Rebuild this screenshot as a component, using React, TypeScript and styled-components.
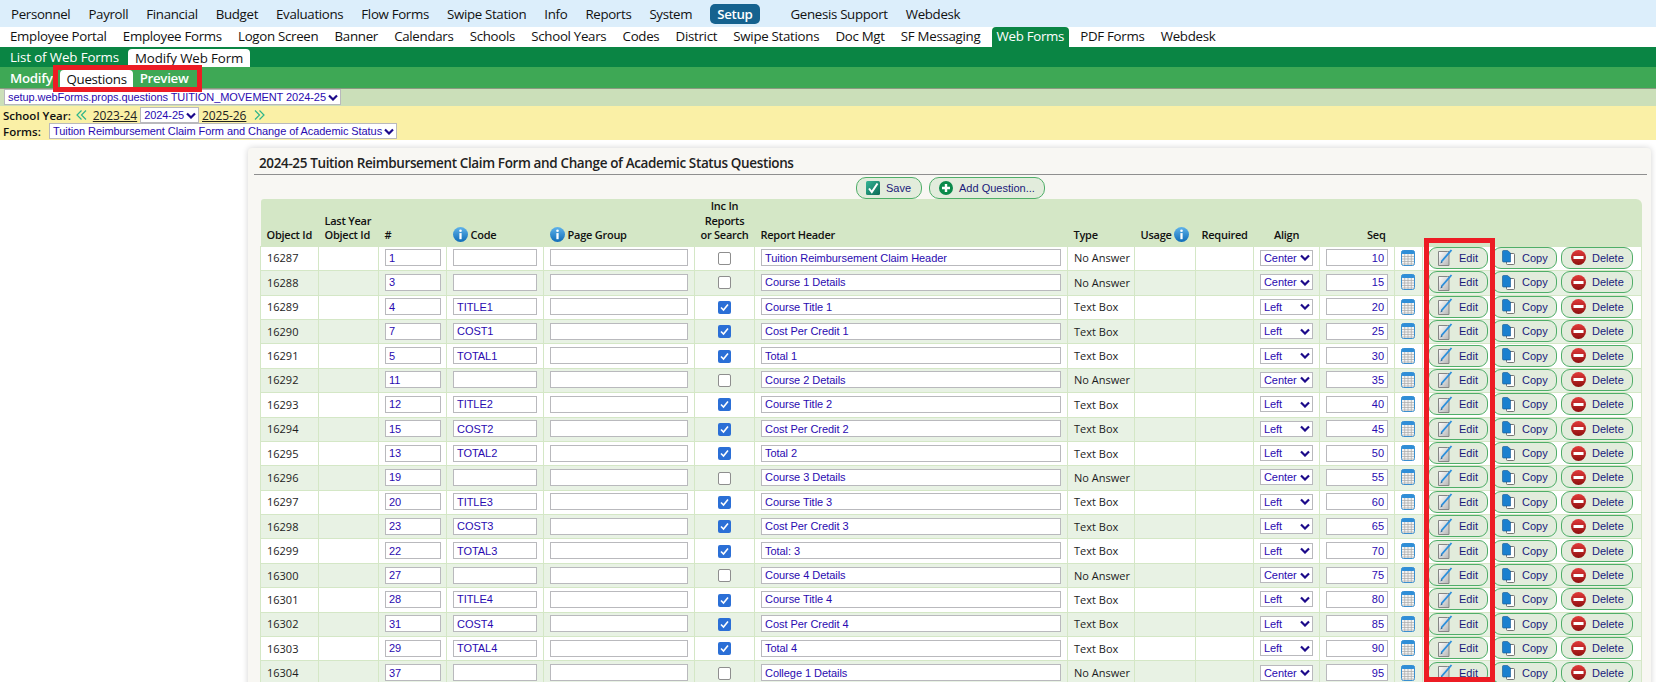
import React from "react";
import styled, { createGlobalStyle } from "styled-components";

const Global = createGlobalStyle`
  html, body { margin: 0; padding: 0; height: 682px; overflow: hidden; background: #fff; }
  body { font-family: "Open Sans", "Liberation Sans", sans-serif; color: #111; }
  * { box-sizing: border-box; }
`;

const Page = styled.div`display: flex; flex-direction: column; height: 682px; overflow: hidden; position: relative;`;
const MainMenu = styled.nav`height: 27px; background: #dcEEfb; display: flex; align-items: center; padding: 0 0 0 11px; gap: 18px; font-size: 13.3px; letter-spacing: -.33px;`;
const MainItem = styled.span<{ $active?: boolean; $gap?: number }>`
  color: ${p => (p.$active ? "#fff" : "#111")};
  background: ${p => (p.$active ? "#15628f" : "transparent")};
  font-weight: ${p => (p.$active ? 600 : 400)};
  border-radius: 5px;
  padding: ${p => (p.$active ? "1px 7px" : "0")};
  margin-left: ${p => p.$gap ?? 0}px;
  margin-right: ${p => (p.$active ? "-4px" : "0")};
`;
const SubMenu = styled.nav`height: 20px; background: #fff; display: flex; align-items: flex-end; padding-left: 10px; gap: 16.2px; font-size: 13.3px; letter-spacing: -.3px;`;
const SubItem = styled.span<{ $active?: boolean }>`
  height: 20px; line-height: 19px;
  color: ${p => (p.$active ? "#fff" : "#111")};
  background: ${p => (p.$active ? "#0a8544" : "transparent")};
  border-radius: 4px 4px 0 0;
  padding: 0 ${p => (p.$active ? "5px" : "0")};
  margin: 0 ${p => (p.$active ? "-5px" : "0")};
`;
const TabBar = styled.nav`height: 20px; background: #0a8544; display: flex; align-items: flex-end; padding-left: 10px; gap: 9px; font-size: 13.3px; letter-spacing: -.12px; color: #fff;`;
const Tab = styled.span<{ $active?: boolean }>`
  height: ${p => (p.$active ? "18px" : "20px")}; line-height: ${p => (p.$active ? "18px" : "20px")};
  padding: 0 ${p => (p.$active ? "7px" : "0")};
  background: ${p => (p.$active ? "#fff" : "transparent")};
  color: ${p => (p.$active ? "#111" : "#fff")};
  border-radius: 4px 4px 0 0;
`;
const PropTabs = styled.nav`height: 21px; background: #3ea855; display: flex; align-items: flex-end; padding-left: 10px; font-size: 13.3px; letter-spacing: -.3px; font-weight: 600; color: #fff; position: relative;`;
const PropTab = styled.span<{ $active?: boolean }>`
  height: ${p => (p.$active ? "18px" : "19px")}; line-height: 18px;
  padding: 0 ${p => (p.$active ? "6px" : "7px")};
  font-weight: ${p => (p.$active ? 400 : 600)};
  background: ${p => (p.$active ? "#fff" : "transparent")};
  color: ${p => (p.$active ? "#111" : "#fff")};
  border-radius: 4px 4px 0 0;
`;
const PlainTab = styled.span`height: 19px; line-height: 18px; margin-right: 8px;`;
const RedBox = styled.div`position: absolute; left: 53px; top: -2px; width: 149px; height: 27px; border: 5px solid #ed1c24; pointer-events: none;`;

const PropBar = styled.div`height: 18px; background: #cbdfb9; border-top: 1px solid #8a9a80; display: flex; align-items: center; padding: 0 0 1px 4px;`;
const YearArea = styled.div`height: 34px; background: #faf0a6; padding: 1px 3px; font-size: 11.5px; font-weight: 600; display: flex; flex-direction: column; gap: 0;`;
const YearRow = styled.div`height: 16px; display: flex; align-items: center; letter-spacing: 0;`;
const YearLink = styled.span`font-size: 12px; font-weight: 400; letter-spacing: -.1px; text-decoration: underline; margin: 0 3px; color: #222;`;
const ArrowSvg = styled.svg`margin: 0 3px 0 5px; flex: none;`;
const FormsLabel = styled.span`width: 46px;`;

const Sel = styled.span<{ $w?: number }>`
  display: inline-flex; align-items: center; justify-content: space-between;
  height: 16px; ${p => (p.$w ? `width:${p.$w}px;` : "")}
  background: #fff; border: 1px solid #b9b9bd;
  color: #2a0ab0; font: 400 11px "Liberation Sans", sans-serif; letter-spacing: -.07px;
  padding: 0 2px 0 3px; gap: 2px; white-space: nowrap;
`;
const Chevron = () => (
  <svg width="10" height="7" viewBox="0 0 10 7" style={{ flex: "none" }}>
    <path d="M1 1.5 L5 5.5 L9 1.5" fill="none" stroke="#1c0a8a" strokeWidth="2.2" />
  </svg>
);
const DoubleArrow = ({ right }: { right?: boolean }) => (
  <ArrowSvg width="11" height="10" viewBox="0 0 11 10">
    <path d={right ? "M1 .5 L5.5 5 L1 9.5 M5.5 .5 L10 5 L5.5 9.5" : "M5.5 .5 L1 5 L5.5 9.5 M10 .5 L5.5 5 L10 9.5"} fill="none" stroke="#2fb58a" strokeWidth="1.2" />
  </ArrowSvg>
);

const Panel = styled.section`
  position: absolute; left: 248px; top: 148px; width: 1403px; height: 560px;
  background: #f8f7f3; box-shadow: 0 0 6px rgba(0,0,0,.18); border-radius: 4px 4px 0 0;
`;
const TitleBar = styled.div`height: 26.5px; margin: 0 4px 0 6px; border-bottom: 1px solid #8f8f8f; font-size: 13.5px; font-weight: 600; letter-spacing: -.37px; padding: 6px 0 0 5px; line-height: 19px; color: #222;`;
const Actions = styled.div`height: 24.5px; padding-top: 2px; display: flex; gap: 7px; padding-left: 608px;`;
const PillBtn = styled.span<{ $w: number }>`
  display: inline-flex; align-items: center; gap: 6px; padding-left: 9px;
  width: ${p => p.$w}px; height: 22px;
  border: 1px solid #4fae68; border-radius: 10px; background: #e2ecdc;
  color: #1a1a7a; font: 400 11px "Liberation Sans", sans-serif;
`;

const Table = styled.table`
  margin-left: 12px; width: 1381px; border-collapse: collapse; table-layout: fixed;
  font-size: 11px;
`;
const Head = styled.tr`background: #d4e7c6; height: 47px;`;
const Th = styled.th<{ $align?: string }>`
  vertical-align: bottom; font-weight: 600; font-size: 11px; letter-spacing: -.25px; line-height: 14.6px; padding: 0 0 3px 6px;
  text-align: ${p => p.$align ?? "left"}; white-space: nowrap; color: #111;
  &:first-child { border-radius: 3px 0 0 0; } &:last-child { border-radius: 0 6px 0 0; }
`;
const Row = styled.tr<{ $alt: boolean }>`background: ${p => (p.$alt ? "#e8f2e4" : "#fff")}; height: 24.4px;`;
const Td = styled.td<{ $center?: boolean }>`
  border: 1px solid #d4e7c6; padding: 0 0 1px 6px; white-space: nowrap; font-size: 11px; color: #1c1c1c;
  text-align: ${p => (p.$center ? "center" : "left")}; vertical-align: middle;
`;
const CellInput = styled.span<{ $w: number; $right?: boolean }>`
  display: flex; align-items: center; justify-content: ${p => (p.$right ? "flex-end" : "flex-start")};
  width: ${p => p.$w}px; height: 17px; background: #fff; border: 1px solid #b9b9bd;
  color: #2a0ab0; font: 400 11px "Liberation Sans", sans-serif; letter-spacing: -.05px; padding: 0 3px 0 3px;
`;
const Check = styled.span<{ $on: boolean }>`
  display: inline-flex; align-items: center; justify-content: center; vertical-align: middle;
  width: 13px; height: 13px; border-radius: 2px; margin-top: -2px;
  background: ${p => (p.$on ? "#2b6fd6" : "#fff")};
  border: ${p => (p.$on ? "none" : "1px solid #8e8e8e")};
`;
const BtnGroup = styled.div`display: flex; gap: 4px; margin-left: -1px;`;
const Btn = styled.span<{ $w: number; $gap: number }>`
  display: inline-flex; align-items: center; gap: ${p => p.$gap}px; padding-left: 9px;
  width: ${p => p.$w}px; height: 22px; border: 1px solid #4fae68; border-radius: 9px; background: #e2ecdc;
  color: #1a1a7a; font: 400 11px "Liberation Sans", sans-serif;
`;
const EditRed = styled.div`position: absolute; left: 1424px; top: 238px; width: 71px; height: 444px; border: 5px solid #ed1c24; pointer-events: none;`;

const Info = () => (
  <svg width="15" height="15" viewBox="0 0 16 16" style={{ verticalAlign: "-3px", marginRight: 3 }}>
    <defs><linearGradient id="ig" x1="0" y1="0" x2="0" y2="1"><stop offset="0" stopColor="#5fb3ea" /><stop offset="1" stopColor="#0f6cb8" /></linearGradient></defs>
    <circle cx="8" cy="8" r="8" fill="url(#ig)" />
    <circle cx="8" cy="4" r="1.4" fill="#fff" />
    <rect x="6.8" y="6.5" width="2.4" height="6.5" fill="#fff" />
  </svg>
);
const Cal = () => (
  <svg width="14" height="16" viewBox="0 0 14 16" style={{ display: "block" }}>
    <rect x=".5" y=".5" width="13" height="15" rx="2" fill="#f4f4f4" stroke="#3a8fd0" />
    <rect x=".5" y=".5" width="13" height="3.5" rx="1.5" fill="#2f8ed8" />
    <path d="M1 6.5h12M1 9h12M1 11.5h12M1 14h12M3.7 4v11M7 4v11M10.3 4v11" stroke="#a8a8a8" strokeWidth=".7" />
  </svg>
);
const EditIcon = () => (
  <svg width="15" height="17" viewBox="0 0 15 17" style={{ flex: "none" }}>
    <defs><linearGradient id="eg" x1="0" y1="0" x2="1" y2="1"><stop offset="0" stopColor="#fff" /><stop offset="1" stopColor="#b5b5b5" /></linearGradient></defs>
    <path d="M.5 2.5h9l1.5 0v14H.5z" fill="url(#eg)" stroke="#858585" />
    <path d="M3.5 12.5 L13.5 1" stroke="#2b8fdc" strokeWidth="1.9" fill="none" />
    <path d="M2.5 14.5 l.6-2.6 1.6 1.4z" fill="#1f5f92" />
  </svg>
);
const CopyIcon = () => (
  <svg width="13" height="15" viewBox="0 0 13 15" style={{ flex: "none" }}>
    <rect x="4.5" y="3.5" width="8" height="11" rx="1" fill="#fff" stroke="#555" strokeWidth=".8" />
    <path d="M.5 1.5Q.5 .5 1.5 .5H5.5L8.5 3V12H1.5Q.5 12 .5 11z" fill="#1a80cf" stroke="#14568f" strokeWidth=".6" />
  </svg>
);
const DeleteIcon = () => (
  <svg width="15" height="15" viewBox="0 0 15 15" style={{ flex: "none" }}>
    <defs><linearGradient id="dg" x1="0" y1="0" x2="0" y2="1"><stop offset="0" stopColor="#e23a3a" /><stop offset="1" stopColor="#8f1010" /></linearGradient></defs>
    <circle cx="7.5" cy="7.5" r="7.5" fill="url(#dg)" />
    <rect x="2.5" y="6" width="10" height="3" fill="#fff" />
  </svg>
);
const SaveIcon = () => (
  <svg width="14" height="14" viewBox="0 0 14 14" style={{ flex: "none" }}>
    <defs><linearGradient id="sg" x1="0" y1="0" x2="1" y2="1"><stop offset="0" stopColor="#35b596" /><stop offset="1" stopColor="#0c6a55" /></linearGradient></defs>
    <rect width="14" height="14" rx="1.5" fill="url(#sg)" />
    <path d="M3 7.5 L5.8 11 L11.5 2.5" fill="none" stroke="#fff" strokeWidth="2" />
  </svg>
);
const AddIcon = () => (
  <svg width="14" height="14" viewBox="0 0 14 14" style={{ flex: "none" }}>
    <circle cx="7" cy="7" r="7" fill="#0a8a4a" />
    <path d="M7 3v8M3 7h8" stroke="#fff" strokeWidth="2.4" />
  </svg>
);

const main = ["Personnel", "Payroll", "Financial", "Budget", "Evaluations", "Flow Forms", "Swipe Station", "Info", "Reports", "System"];
const sub = ["Employee Portal", "Employee Forms", "Logon Screen", "Banner", "Calendars", "Schools", "School Years", "Codes", "District", "Swipe Stations", "Doc Mgt", "SF Messaging", "Web Forms", "PDF Forms", "Webdesk"];

type Q = [number, number, string, boolean, string, string, string, number];
const rows: Q[] = [
  [16287, 1, "", false, "Tuition Reimbursement Claim Header", "No Answer", "Center", 10],
  [16288, 3, "", false, "Course 1 Details", "No Answer", "Center", 15],
  [16289, 4, "TITLE1", true, "Course Title 1", "Text Box", "Left", 20],
  [16290, 7, "COST1", true, "Cost Per Credit 1", "Text Box", "Left", 25],
  [16291, 5, "TOTAL1", true, "Total 1", "Text Box", "Left", 30],
  [16292, 11, "", false, "Course 2 Details", "No Answer", "Center", 35],
  [16293, 12, "TITLE2", true, "Course Title 2", "Text Box", "Left", 40],
  [16294, 15, "COST2", true, "Cost Per Credit 2", "Text Box", "Left", 45],
  [16295, 13, "TOTAL2", true, "Total 2", "Text Box", "Left", 50],
  [16296, 19, "", false, "Course 3 Details", "No Answer", "Center", 55],
  [16297, 20, "TITLE3", true, "Course Title 3", "Text Box", "Left", 60],
  [16298, 23, "COST3", true, "Cost Per Credit 3", "Text Box", "Left", 65],
  [16299, 22, "TOTAL3", true, "Total: 3", "Text Box", "Left", 70],
  [16300, 27, "", false, "Course 4 Details", "No Answer", "Center", 75],
  [16301, 28, "TITLE4", true, "Course Title 4", "Text Box", "Left", 80],
  [16302, 31, "COST4", true, "Cost Per Credit 4", "Text Box", "Left", 85],
  [16303, 29, "TOTAL4", true, "Total 4", "Text Box", "Left", 90],
  [16304, 37, "", false, "College 1 Details", "No Answer", "Center", 95],
];
const cols = [58, 60, 68, 97, 151, 60, 313, 67, 61, 58, 66, 75, 28, 219];

export default function App() {
  return (
    <Page>
      <Global />
      <MainMenu>
        {main.map(m => <MainItem key={m}>{m}</MainItem>)}
        <MainItem $active>Setup</MainItem>
        <MainItem $gap={17}>Genesis Support</MainItem>
        <MainItem>Webdesk</MainItem>
      </MainMenu>
      <SubMenu>{sub.map(s => <SubItem key={s} $active={s === "Web Forms"}>{s}</SubItem>)}</SubMenu>
      <TabBar><Tab>List of Web Forms</Tab><Tab $active>Modify Web Form</Tab></TabBar>
      <PropTabs>
        <PlainTab>Modify</PlainTab>
        <PropTab $active>Questions</PropTab>
        <PropTab>Preview</PropTab>
        <RedBox />
      </PropTabs>
      <PropBar><Sel>setup.webForms.props.questions TUITION_MOVEMENT 2024-25 <Chevron /></Sel></PropBar>
      <YearArea>
        <YearRow>School Year:<DoubleArrow /><YearLink>2023-24</YearLink><Sel>2024-25 <Chevron /></Sel><YearLink>2025-26</YearLink><DoubleArrow right /></YearRow>
        <YearRow><FormsLabel>Forms:</FormsLabel><Sel>Tuition Reimbursement Claim Form and Change of Academic Status <Chevron /></Sel></YearRow>
      </YearArea>
      <Panel>
        <TitleBar>2024-25 Tuition Reimbursement Claim Form and Change of Academic Status Questions</TitleBar>
        <Actions>
          <PillBtn $w={66}><SaveIcon />Save</PillBtn>
          <PillBtn $w={116}><AddIcon />Add Question...</PillBtn>
        </Actions>
        <Table>
          <colgroup>{cols.map((c, i) => <col key={i} style={{ width: c }} />)}</colgroup>
          <thead>
            <Head>
              <Th>Object Id</Th>
              <Th>Last Year<br />Object Id</Th>
              <Th>#</Th>
              <Th><Info />Code</Th>
              <Th><Info />Page Group</Th>
              <Th $align="center" style={{ paddingLeft: 0 }}>Inc In<br />Reports<br />or Search</Th>
              <Th>Report Header</Th>
              <Th>Type</Th>
              <Th>Usage <Info /></Th>
              <Th>Required</Th>
              <Th $align="center" style={{ paddingLeft: 0 }}>Align</Th>
              <Th $align="right" style={{ paddingRight: 9 }}>Seq</Th>
              <Th />
              <Th />
            </Head>
          </thead>
          <tbody>
            {rows.map((r, i) => (
              <Row key={r[0]} $alt={i % 2 === 1}>
                <Td>{r[0]}</Td>
                <Td />
                <Td><CellInput $w={56}>{r[1]}</CellInput></Td>
                <Td><CellInput $w={84}>{r[2]}</CellInput></Td>
                <Td><CellInput $w={138} /></Td>
                <Td $center style={{ paddingLeft: 0 }}>
                  <Check $on={r[3]}>{r[3] && <svg width="9" height="9" viewBox="0 0 9 9"><path d="M1 4.5 L3.5 7 L8 1.5" fill="none" stroke="#fff" strokeWidth="1.6" /></svg>}</Check>
                </Td>
                <Td><CellInput $w={300}>{r[4]}</CellInput></Td>
                <Td>{r[5]}</Td>
                <Td />
                <Td />
                <Td><Sel $w={53}>{r[6]}<Chevron /></Sel></Td>
                <Td><CellInput $w={62} $right>{r[7]}</CellInput></Td>
                <Td><Cal /></Td>
                <Td>
                  <BtnGroup>
                    <Btn $w={60} $gap={6}><EditIcon />Edit</Btn>
                    <Btn $w={65} $gap={7}><CopyIcon />Copy</Btn>
                    <Btn $w={72} $gap={6}><DeleteIcon />Delete</Btn>
                  </BtnGroup>
                </Td>
              </Row>
            ))}
          </tbody>
        </Table>
      </Panel>
      <EditRed />
    </Page>
  );
}
